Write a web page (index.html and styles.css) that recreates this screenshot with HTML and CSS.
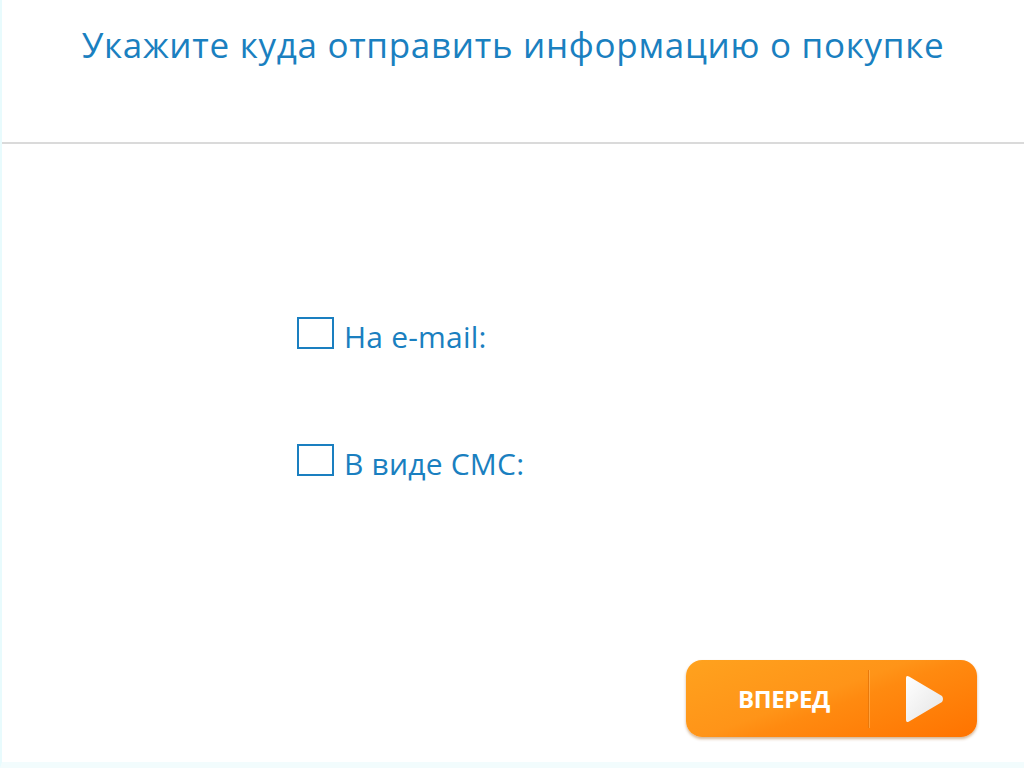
FILE: index.html
```html
<!DOCTYPE html>
<html lang="ru">
<head>
    <meta charset="UTF-8">
    <title>Информация о покупке</title>
    <link rel="stylesheet" href="styles.css">
</head>
<body>
    <div class="screen">
        <header class="top">
            <h1>Укажите куда отправить информацию о покупке</h1>
        </header>

        <div class="options">
            <label class="option">
                <span class="box"></span>
                <span class="option-text">На e-mail:</span>
            </label>
            <label class="option">
                <span class="box"></span>
                <span class="option-text">В виде СМС:</span>
            </label>
        </div>

        <div class="footer">
            <button class="next">
                <span class="next-label">ВПЕРЕД</span>
                <span class="next-sep"></span>
                <span class="next-arrow">
                    <svg width="40" height="50" viewBox="0 0 40 50">
                        <defs>
                            <linearGradient id="arr" x1="0" y1="0" x2="1" y2="1">
                                <stop offset="0" stop-color="#ffffff"/>
                                <stop offset="1" stop-color="#e4e4e4"/>
                            </linearGradient>
                        </defs>
                        <path d="M2 4 Q2 1 5 2.5 L38 22 Q40 25 38 28 L5 47.5 Q2 49 2 46 Z" fill="url(#arr)"/>
                    </svg>
                </span>
            </button>
        </div>
    </div>
</body>
</html>
```

FILE: styles.css
```css
body {
    margin: 0;
    background: #ffffff;
    font-family: 'Open Sans', 'Noto Sans', sans-serif;
}

.screen {
    width: 1024px;
    height: 768px;
    box-sizing: border-box;
    border-left: 2px solid #e8fbfd;
    border-bottom: 6px solid #f2fcfd;
    display: flex;
    flex-direction: column;
}

.top {
    height: 142px;
    border-bottom: 2px solid #dadada;
    box-sizing: content-box;
}

h1 {
    margin: 0;
    padding-top: 20px;
    text-align: center;
    font-weight: 400;
    font-size: 35px;
    line-height: 50px;
    color: #1a80c0;
    letter-spacing: 0.7px;
}

.options {
    padding: 173px 0 0 295px;
    display: flex;
    flex-direction: column;
    gap: 95px;
}

.option {
    display: flex;
    align-items: center;
    gap: 10px;
    height: 32px;
    color: #1a7fc0;
}

.box {
    width: 33px;
    height: 28px;
    border: 2px solid #1a7fc0;
}

.option-text {
    font-size: 30px;
    line-height: 32px;
    padding-top: 7px;
    letter-spacing: 0.2px;
}

.footer {
    margin-top: auto;
    display: flex;
    justify-content: flex-end;
    padding: 0 47px 25px 0;
}

.next {
    width: 291px;
    height: 77px;
    border: none;
    border-radius: 16px;
    padding: 0;
    display: flex;
    align-items: center;
    background: linear-gradient(160deg, #ffa21e 0%, #ff9418 45%, #ff8a10 55%, #ff7300 100%);
    box-shadow: 0 2px 3px rgba(160, 90, 20, 0.45);
    cursor: pointer;
}

.next-label {
    width: 182px;
    box-sizing: border-box;
    padding-left: 14px;
    text-align: center;
    color: #ffffff;
    font-family: 'Open Sans', sans-serif;
    font-weight: 700;
    font-size: 24px;
    letter-spacing: -0.4px;
}

.next-sep {
    width: 1px;
    height: 58px;
    background: #e8780a;
    box-shadow: 1px 0 0 rgba(255, 190, 110, 0.5);
}

.next-arrow {
    flex: 1;
    display: flex;
    justify-content: center;
    padding-left: 2px;
}
```
